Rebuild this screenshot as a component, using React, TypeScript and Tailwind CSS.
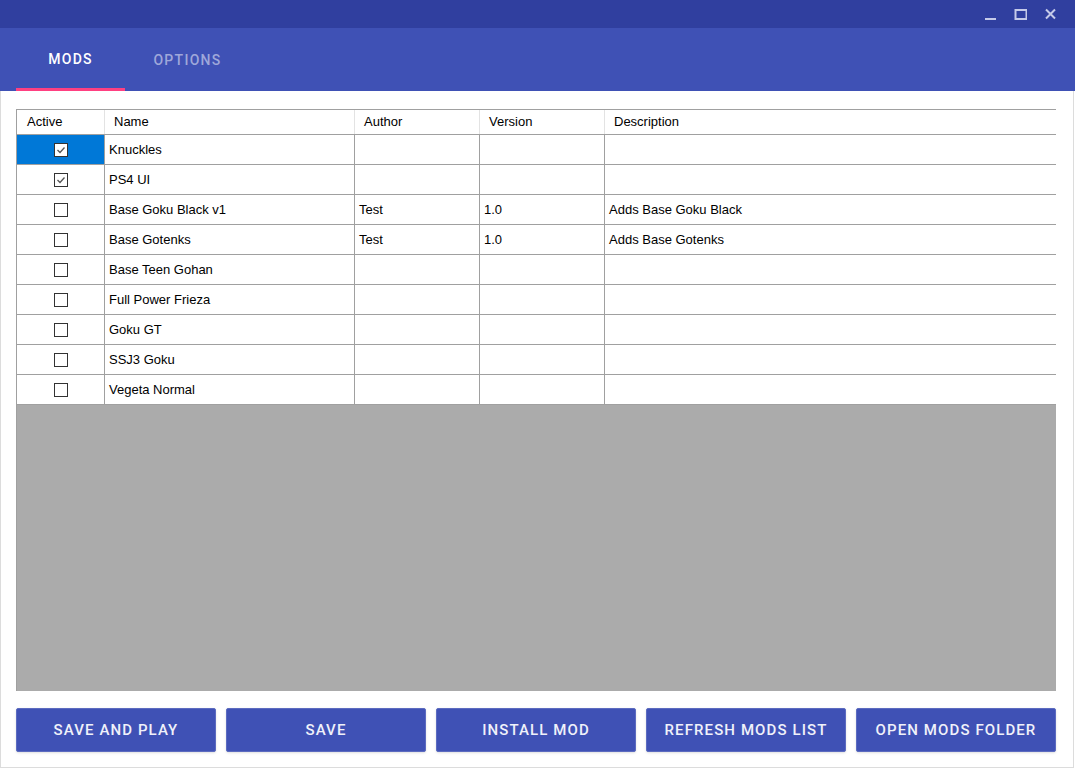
import React from 'react';

type Mod = { name: string; author?: string; version?: string; description?: string; active: boolean };

const mods: Mod[] = [
  { name: 'Knuckles', active: true },
  { name: 'PS4 UI', active: true },
  { name: 'Base Goku Black v1', author: 'Test', version: '1.0', description: 'Adds Base Goku Black', active: false },
  { name: 'Base Gotenks', author: 'Test', version: '1.0', description: 'Adds Base Gotenks', active: false },
  { name: 'Base Teen Gohan', active: false },
  { name: 'Full Power Frieza', active: false },
  { name: 'Goku GT', active: false },
  { name: 'SSJ3 Goku', active: false },
  { name: 'Vegeta Normal', active: false },
];

const buttons = ['SAVE AND PLAY', 'SAVE', 'INSTALL MOD', 'REFRESH MODS LIST', 'OPEN MODS FOLDER'];

const cols = 'grid grid-cols-[88px_250px_125px_125px_1fr]';

function Check({ checked }: { checked: boolean }) {
  return (
    <svg width="14" height="14" viewBox="0 0 14 14">
      <rect x="0.5" y="0.5" width="13" height="13" fill="#fff" stroke="#333" />
      {checked && <path d="M3.5 7 L6 9.5 L10.5 4.5" fill="none" stroke="#555" strokeWidth="1.3" />}
    </svg>
  );
}

export default function App() {
  return (
    <div className="w-[1075px] h-[768px] bg-white overflow-hidden">
      {/* title bar */}
      <div className="h-[28px] bg-[#303f9f] flex items-center justify-end pr-[18px] gap-[17px]">
        <svg width="13" height="13" viewBox="0 0 13 13">
          <rect x="1" y="10" width="11" height="2" fill="#c5cae9" />
        </svg>
        <svg width="13" height="13" viewBox="0 0 13 13">
          <rect x="1.5" y="2" width="11" height="9" fill="none" stroke="#c5cae9" strokeWidth="2" />
        </svg>
        <svg width="13" height="13" viewBox="0 0 13 13">
          <path d="M2 1.5 L11 10.5 M11 1.5 L2 10.5" stroke="#c5cae9" strokeWidth="2" />
        </svg>
      </div>
      {/* tabs */}
      <div className="h-[63px] bg-[#3f51b5] flex pl-[16px] font-['Roboto',sans-serif] font-medium text-[14px] tracking-[1.3px]">
        <div className="w-[109px] flex flex-col">
          <div className="flex-1 flex items-center justify-center text-white pt-[3px]">MODS</div>
          <div className="h-[3px] bg-[#ff4081]" />
        </div>
        <div className="w-[125px] flex items-center justify-center text-[#9fa8da] pt-[1px]">OPTIONS</div>
      </div>
      {/* body */}
      <div className="w-[1074px] h-[677px] border-x border-b border-[#dcdcdc] pt-[18px] pl-[15px]">
        <div className="w-[1040px] h-[582px] bg-[#ababab] border-l border-t border-[#a0a0a0] font-['Liberation_Sans',Arial,sans-serif] text-[13px] text-black flex flex-col">
          <div className={`${cols} h-[25px] bg-white border-b border-[#a0a0a0]`}>
            <div className="pl-[10px] flex items-center border-r border-[#e3e3e3]">Active</div>
            <div className="pl-[9px] flex items-center border-r border-[#e3e3e3]">Name</div>
            <div className="pl-[9px] flex items-center border-r border-[#e3e3e3]">Author</div>
            <div className="pl-[9px] flex items-center border-r border-[#e3e3e3]">Version</div>
            <div className="pl-[9px] flex items-center">Description</div>
          </div>
          {mods.map((m, i) => (
            <div key={m.name} className={`${cols} h-[30px] bg-white border-b border-[#a0a0a0]`}>
              <div className={`flex items-center justify-center border-r border-[#a0a0a0] ${i === 0 ? 'bg-[#0078d7]' : ''}`}>
                <Check checked={m.active} />
              </div>
              <div className="pl-[4px] pt-[1px] flex items-center border-r border-[#a0a0a0]">{m.name}</div>
              <div className="pl-[4px] pt-[1px] flex items-center border-r border-[#a0a0a0]">{m.author}</div>
              <div className="pl-[4px] pt-[1px] flex items-center border-r border-[#a0a0a0]">{m.version}</div>
              <div className="pl-[4px] pt-[1px] flex items-center">{m.description}</div>
            </div>
          ))}
        </div>
        <div className="w-[1040px] mt-[17px] grid grid-cols-5 gap-[10px]">
          {buttons.map((b) => (
            <button
              key={b}
              className="h-[44px] bg-[#3f51b5] rounded-[2px] border border-[#5c6bc0] shadow-sm text-[#f0f1fa] font-['Roboto',sans-serif] font-medium text-[15px] tracking-[1.1px]"
            >
              {b}
            </button>
          ))}
        </div>
      </div>
    </div>
  );
}
